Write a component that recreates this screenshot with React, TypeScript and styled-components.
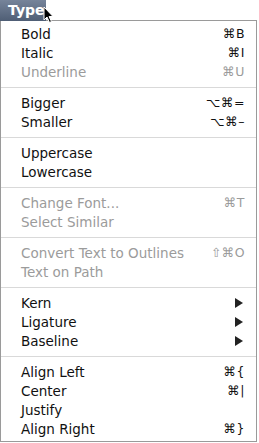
import React from "react";
import styled, { createGlobalStyle } from "styled-components";

const Global = createGlobalStyle`
  html, body { margin: 0; padding: 0; background: #fff; }
  body { font-family: "DejaVu Sans", "Liberation Sans", sans-serif; }
`;

const Page = styled.div`
  position: relative;
  width: 259px;
  height: 443px;
  background: #fff;
  overflow: hidden;
`;

const TitleBar = styled.div`
  display: flex;
  height: 21px;
`;

const Title = styled.div`
  width: 46px;
  height: 21px;
  box-sizing: border-box;
  padding-left: 8px;
  background: linear-gradient(#76849a, #4f5e75);
  color: #fff;
  font-weight: bold;
  font-size: 14px;
  line-height: 21px;
`;

const Menu = styled.div`
  width: 257px;
  height: 422px;
  box-sizing: border-box;
  border: 1px solid #9a9a9a;
  padding-top: 3px;
  display: flex;
  flex-direction: column;
  margin-top: -1px;
`;

const Row = styled.div<{ $disabled?: boolean }>`
  display: flex;
  align-items: center;
  justify-content: space-between;
  height: 19px;
  padding: 0 11px 0 20px;
  font-size: 13.5px;
  color: ${(p) => (p.$disabled ? "#9b9b9b" : "#111")};
`;

const Shortcut = styled.span`
  font-size: 12.5px;
  letter-spacing: 0.5px;
`;

const Arrow = styled.span`
  width: 0;
  height: 0;
  border-top: 5px solid transparent;
  border-bottom: 5px solid transparent;
  border-left: 8px solid #222;
  margin-right: 2px;
`;

const Sep = styled.div`
  height: 1px;
  background: #d9d9d9;
  margin: 6px 0 5px;
`;

const Cursor = styled.svg`
  position: absolute;
  left: 43px;
  top: 6px;
`;

type Item = { label: string; sc?: string; dis?: boolean; sub?: boolean } | "sep";

const items: Item[] = [
  { label: "Bold", sc: "⌘B" },
  { label: "Italic", sc: "⌘I" },
  { label: "Underline", sc: "⌘U", dis: true },
  "sep",
  { label: "Bigger", sc: "⌥⌘=" },
  { label: "Smaller", sc: "⌥⌘–" },
  "sep",
  { label: "Uppercase" },
  { label: "Lowercase" },
  "sep",
  { label: "Change Font...", sc: "⌘T", dis: true },
  { label: "Select Similar", dis: true },
  "sep",
  { label: "Convert Text to Outlines", sc: "⇧⌘O", dis: true },
  { label: "Text on Path", dis: true },
  "sep",
  { label: "Kern", sub: true },
  { label: "Ligature", sub: true },
  { label: "Baseline", sub: true },
  "sep",
  { label: "Align Left", sc: "⌘{" },
  { label: "Center", sc: "⌘|" },
  { label: "Justify" },
  { label: "Align Right", sc: "⌘}" },
];

export default function App() {
  return (
    <Page>
      <Global />
      <TitleBar>
        <Title>Type</Title>
      </TitleBar>
      <Menu>
        {items.map((it, i) =>
          it === "sep" ? (
            <Sep key={i} />
          ) : (
            <Row key={i} $disabled={it.dis}>
              <span>{it.label}</span>
              {it.sub ? <Arrow /> : it.sc ? <Shortcut>{it.sc}</Shortcut> : null}
            </Row>
          )
        )}
      </Menu>
      <Cursor width="12" height="18" viewBox="0 0 12 18">
        <path d="M1 1 L1 14 L4 11 L6.5 16.5 L8.5 15.5 L6 10.5 L10 10.5 Z" fill="#000" stroke="#fff" strokeWidth="1" />
      </Cursor>
    </Page>
  );
}
